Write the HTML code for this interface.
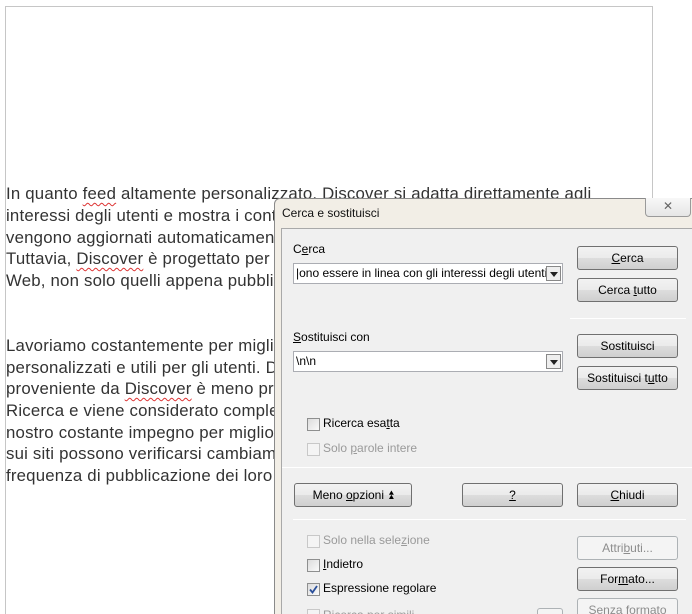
<!DOCTYPE html>
<html style="width:692px;height:614px;overflow:hidden"><head><meta charset="utf-8"><style>
*{margin:0;padding:0;box-sizing:border-box}
body{width:692px;height:614px;overflow:hidden;background:#fff;position:relative;font-family:"Liberation Sans",sans-serif}
.page{position:absolute;left:5px;top:6px;width:648px;height:620px;border-left:1px solid #c6c6c6;border-top:1px solid #c6c6c6;border-right:1px solid #c6c6c6}
.l{position:absolute;left:6px;font-size:16.8px;color:#333;white-space:nowrap;letter-spacing:0.2px}
.sq{text-decoration:underline wavy #d33;text-decoration-thickness:1px;text-underline-offset:3px}
.dlg{position:absolute;left:274px;top:198px;width:430px;height:430px;background:#f2eee6;border:1px solid #8a8a8a;border-radius:6px 0 0 0}
.title{position:absolute;left:282px;top:206px;font-size:12px;color:#111}
.close{position:absolute;left:645px;top:198px;width:46px;height:19px;border:1px solid #9a9a9a;border-top:none;border-radius:0 0 4px 4px;background:linear-gradient(#f8f8f8,#e6e6e6);font-size:12px;color:#666;text-align:center;line-height:17px}
.client{position:absolute;left:281px;top:228px;width:420px;height:400px;background:#f0f0f0;border:1px solid #a9a9a9}
.t{position:absolute;font-size:12px;color:#000;white-space:nowrap}
.dis{color:#9a9a9a}
.combo{position:absolute;left:293px;width:270px;height:21px;background:#fff;border:1px solid #abadb3;font-size:12px;line-height:19px;padding-left:2px;white-space:nowrap;overflow:hidden}
.arr{position:absolute;right:1px;top:2px;width:15px;height:15px;border:1px solid #888;background:#eee}
.arr:after{content:"";position:absolute;left:3px;top:5px;border-left:4px solid transparent;border-right:4px solid transparent;border-top:5px solid #222}
.btn{position:absolute;width:101px;height:24px;border:1px solid #707070;border-radius:3px;background:linear-gradient(#f2f2f2 0%,#ebebeb 50%,#dddddd 51%,#cfcfcf 100%);font-size:12px;text-align:center;line-height:22px;color:#000}
.btn.d{border-color:#adb2b5;background:#f4f4f4;color:#8d8d8d}
.sep{position:absolute;height:1px;background:#a0a0a0;border-bottom:1px solid #fff}
.cb{position:absolute;width:13px;height:13px;border:1px solid #8e8f8f;background:linear-gradient(135deg,#dcdcdc,#fafafa)}
.cb.d{border-color:#c8c8c8;background:#f4f4f4}
u{text-decoration:underline}
</style></head><body>
<div class="page"></div>
<div class="l" style="top:184px">In quanto <span class="sq">feed</span> altamente personalizzato, Discover si adatta direttamente agli</div>
<div class="l" style="top:206px">interessi degli utenti e mostra i contenuti più pertinenti. I contenuti di Discover</div>
<div class="l" style="top:228px">vengono aggiornati automaticamente</div>
<div class="l" style="top:249px">Tuttavia, <span class="sq">Discover</span> è progettato per</div>
<div class="l" style="top:271px">Web, non solo quelli appena pubblicati</div>
<div class="l" style="top:336px">Lavoriamo costantemente per migliorare</div>
<div class="l" style="top:358px">personalizzati e utili per gli utenti. Di</div>
<div class="l" style="top:379px">proveniente da <span class="sq">Discover</span> è meno pre</div>
<div class="l" style="top:401px">Ricerca e viene considerato complem</div>
<div class="l" style="top:423px">nostro costante impegno per migliora</div>
<div class="l" style="top:444px">sui siti possono verificarsi cambiame</div>
<div class="l" style="top:466px">frequenza di pubblicazione dei loro</div>

<div class="dlg"></div>
<div class="title">Cerca e sostituisci</div>
<div class="close">&#x2715;</div>
<div class="client"></div>

<div class="t" style="left:293px;top:242px">C<u>e</u>rca</div>
<div class="combo" style="top:263px">|ono essere in linea con gli interessi degli utenti.<div class="arr"></div></div>
<div class="btn" style="left:577px;top:246px"><u>C</u>erca</div>
<div class="btn" style="left:577px;top:278px">Cerca <u>t</u>utto</div>
<div class="sep" style="left:570px;top:318px;width:116px"></div>

<div class="t" style="left:293px;top:330px"><u>S</u>ostituisci con</div>
<div class="combo" style="top:351px">\n\n<div class="arr"></div></div>
<div class="btn" style="left:577px;top:334px">Sostituisci</div>
<div class="btn" style="left:577px;top:366px">Sostituisci t<u>u</u>tto</div>

<div class="cb" style="left:307px;top:418px"></div>
<div class="t" style="left:323px;top:416px">Ricerca esa<u>t</u>ta</div>
<div class="cb d" style="left:307px;top:443px"></div>
<div class="t dis" style="left:323px;top:441px">Solo <u>p</u>arole intere</div>

<div class="sep" style="left:282px;top:467px;width:410px"></div>

<div class="btn" style="left:294px;top:483px;width:118px">Meno <u>o</u>pzioni &#x23EB;&#xFE0E;</div>
<div class="btn" style="left:462px;top:483px"><u>?</u></div>
<div class="btn" style="left:577px;top:483px"><u>C</u>hiudi</div>

<div class="sep" style="left:293px;top:519px;width:393px"></div>

<div class="cb d" style="left:307px;top:535px"></div>
<div class="t dis" style="left:323px;top:533px">Solo nella sele<u>z</u>ione</div>
<div class="cb" style="left:307px;top:559px"></div>
<div class="t" style="left:323px;top:557px"><u>I</u>ndietro</div>
<div class="cb" style="left:307px;top:583px"><svg width="11" height="11" style="position:absolute;left:0;top:0"><path d="M2 5.5 L4.5 8.5 L9 2" stroke="#2a4f9a" stroke-width="1.8" fill="none"/></svg></div>
<div class="t" style="left:323px;top:581px">Espressione re<u>g</u>olare</div>
<div class="cb d" style="left:307px;top:609px"></div>
<div class="t dis" style="left:323px;top:608px">Ricerca per simili</div>
<div class="btn d" style="left:537px;top:608px;width:26px"></div>

<div class="btn d" style="left:577px;top:536px">Attri<u>b</u>uti...</div>
<div class="btn" style="left:577px;top:567px">For<u>m</u>ato...</div>
<div class="btn d" style="left:577px;top:598px">Senza formato</div>
</body></html>
